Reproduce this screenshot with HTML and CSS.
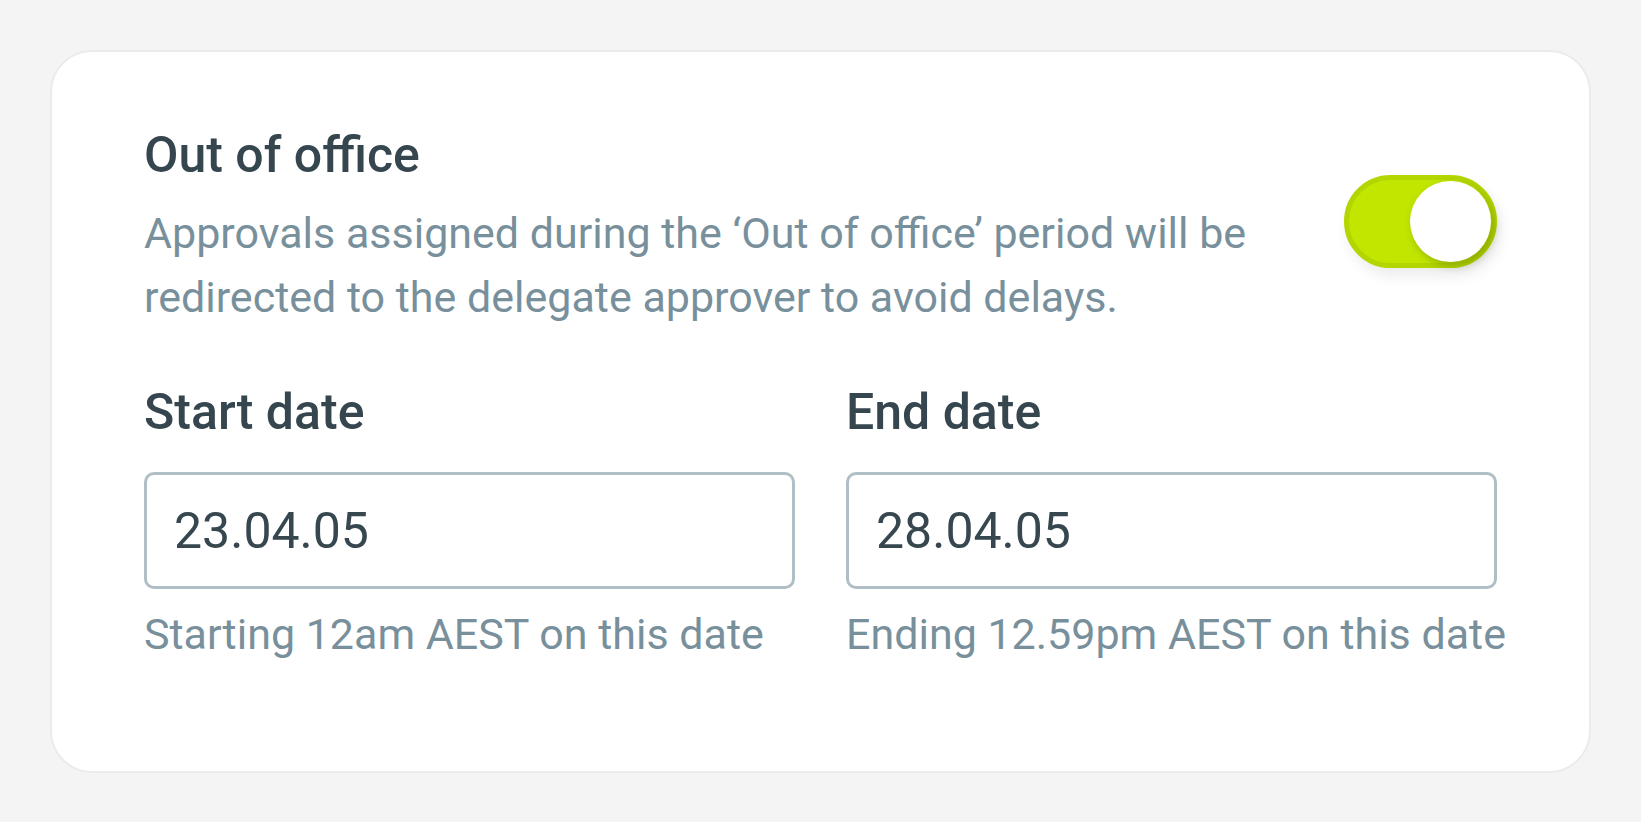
FILE: index.html
```html
<html>
 <head>
  <meta content="width=device-width, initial-scale=1" name="viewport" />
  <link rel="stylesheet" href="styles.css">
 </head>
 <body>
  <div class="card">
   <div class="head">
    <div class="intro">
     <div class="title">Out of office</div>
     <div class="desc">Approvals assigned during the ‘Out of office’ period will be redirected to the delegate approver to avoid delays.</div>
    </div>
    <span class="toggle"><span class="knob"></span></span>
   </div>
   <div class="dates">
    <div class="field">
     <label class="label">Start date</label>
     <div class="box">23.04.05</div>
     <div class="hint">Starting 12am AEST on this date</div>
    </div>
    <div class="field">
     <label class="label">End date</label>
     <div class="box">28.04.05</div>
     <div class="hint">Ending 12.59pm AEST on this date</div>
    </div>
   </div>
  </div>
 </body>
</html>
```

FILE: styles.css
```css
body{
  margin: 0;
  padding: 50px;
  background-color: #f4f4f4;
  font-family: Roboto, "Noto Sans", sans-serif;
}
.card{
  background: #fff;
  border: 2px solid #e9ecee;
  border-radius: 42px;
  padding: 73px 92px 105px;
}
.head{
  display: flex;
  align-items: flex-start;
  justify-content: space-between;
  gap: 60px;
}
.intro{
  max-width: 1140px;
}
.title{
  font-size: 50px;
  font-weight: 500;
  line-height: 60px;
  color: #36464f;
}
.desc{
  margin-top: 16px;
  font-size: 43px;
  line-height: 64px;
  color: #78909c;
}
.toggle{
  position: relative;
  flex: none;
  margin-top: 50px;
  width: 153px;
  height: 93px;
  box-sizing: border-box;
  border-radius: 47px;
  background: #c2e600;
  border: 5px solid #b3d600;
  box-shadow: 4px 8px 14px rgba(0,0,0,0.08);
}
.knob{
  position: absolute;
  top: 1px;
  right: 1px;
  width: 81px;
  height: 81px;
  border-radius: 50%;
  background: #fff;
  box-shadow: 3px 4px 8px rgba(60,80,0,0.35);
}
.dates{
  display: grid;
  grid-template-columns: minmax(0, 1fr) minmax(0, 1fr);
  column-gap: 51px;
  margin-top: 53px;
}
.label{
  display: block;
  font-size: 50px;
  font-weight: 500;
  line-height: 60px;
  color: #36464f;
}
.box{
  margin-top: 30px;
  height: 117px;
  box-sizing: border-box;
  border: 3px solid #b0bec5;
  border-radius: 10px;
  padding-left: 27px;
  display: flex;
  align-items: center;
  font-size: 50px;
  color: #37474f;
}
.hint{
  margin-top: 13px;
  font-size: 43px;
  line-height: 64px;
  color: #78909c;
  white-space: nowrap;
}
```
